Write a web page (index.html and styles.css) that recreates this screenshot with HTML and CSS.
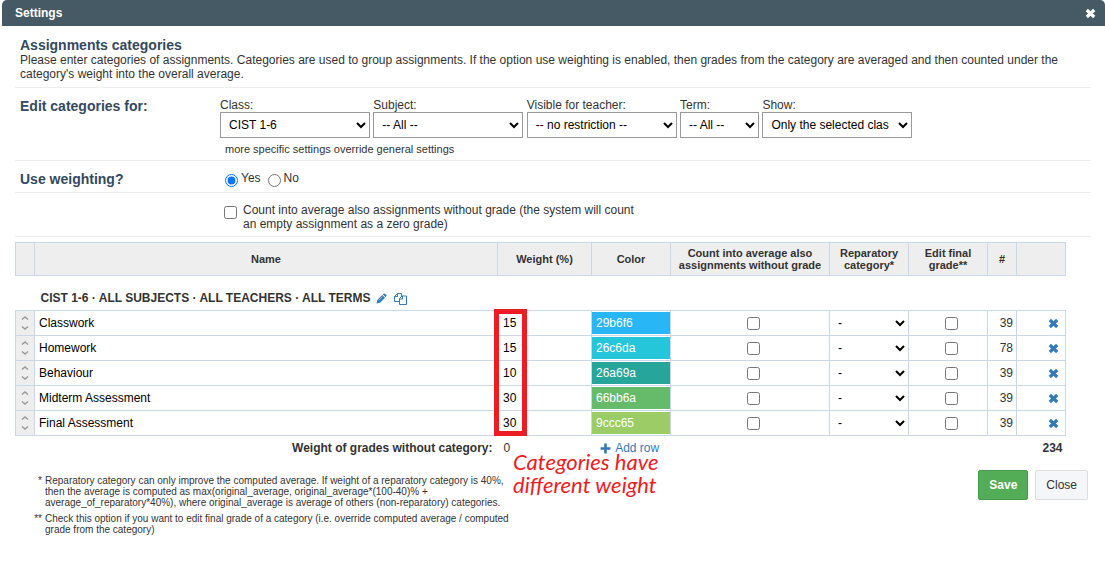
FILE: index.html
```html
<!DOCTYPE html>
<html lang="en">

<head>
    <meta charset="UTF-8">
    <meta name="viewport" content="width=device-width, initial-scale=1.0">
    <title>Settings</title>

    <link rel="stylesheet" href="styles.css">
</head>

<body>
    <!-- icons -->
    <svg class="sprite">
        <symbol id="i-updown" viewBox="0 0 8 14">
            <path d="M1 3.5 L4 1 L7 3.5 M1 10.5 L4 13 L7 10.5" fill="none" stroke="#999" stroke-width="1.4" />
        </symbol>
        <symbol id="i-times" viewBox="0 0 11 11">
            <path d="M1.8 2 L9.2 9 M9.2 2 L1.8 9" fill="none" stroke="currentColor" stroke-width="3.2" />
        </symbol>
        <symbol id="i-plus" viewBox="0 0 10 10">
            <path d="M5 0.5 V9.5 M0.5 5 H9.5" fill="none" stroke="currentColor" stroke-width="2.4" />
        </symbol>
        <symbol id="i-pencil" viewBox="0 0 12 12">
            <path d="M0.6 11.4 L1.4 7.6 L6.8 2.2 L9.8 5.2 L4.4 10.6 Z M7.5 1.5 L8.6 0.6 Q9.2 0.2 9.8 0.7 L11.3 2.2 Q11.8 2.8 11.4 3.4 L10.5 4.5 Z" fill="currentColor" />
            <path d="M3 8 L7 4" stroke="#fff" stroke-width="0.5" />
        </symbol>
        <symbol id="i-copy" viewBox="0 0 13 12">
            <path d="M5 8.5 H0.5 V3.5 L3.5 0.5 H7.5 V3 M3.5 0.5 V3.5 H0.5 M5.5 5.5 L8 3 H12.5 V11.5 H5.5 Z M8.5 3 V6 H5.5" fill="none" stroke="currentColor" />
        </symbol>
    </svg>

    <div class="dialog">
        <div class="titlebar">
            <span>Settings</span>
            <button class="titlebar-close" type="button" aria-label="Close dialog"><svg class="icon"><use href="#i-times" /></svg></button>
        </div>

        <form class="content">
            <div class="row intro">
                <h2>Assignments categories</h2>
                <p>Please enter categories of assignments. Categories are used to group assignments. If the option use weighting is enabled, then grades from the category are averaged and then counted under the category's weight into the overall average.</p>
            </div>

            <div class="row filters">
                <h2>Edit categories for:</h2>
                <div>
                    <div class="filter">
                        <label for="class">Class:</label>
                        <select id="class"><option>CIST 1-6</option></select>
                    </div>
                    <div class="filter">
                        <label for="subject">Subject:</label>
                        <select id="subject"><option>-- All --</option></select>
                    </div>
                    <div class="filter">
                        <label for="teacher">Visible for teacher:</label>
                        <select id="teacher"><option>-- no restriction --</option></select>
                    </div>
                    <div class="filter short">
                        <label for="term">Term:</label>
                        <select id="term"><option>-- All --</option></select>
                    </div>
                    <div class="filter">
                        <label for="show">Show:</label>
                        <select id="show" class="clipped"><option>Only the selected class</option></select>
                    </div>
                    <p class="hint">more specific settings override general settings</p>
                </div>
            </div>

            <div class="row weighting">
                <h2>Use weighting?</h2>
                <div class="radios">
                    <input type="radio" name="weighting" id="w-yes" checked>
                    <label for="w-yes">Yes</label>
                    <input type="radio" name="weighting" id="w-no">
                    <label for="w-no">No</label>
                </div>
            </div>

            <div class="row zero">
                <input type="checkbox" id="zero">
                <label for="zero">Count into average also assignments without grade (the system will count an empty assignment as a zero grade)</label>
            </div>

            <div class="table-wrap">
                <table class="categories">
                    <colgroup>
                        <col class="c-move">
                        <col>
                        <col class="c-weight">
                        <col class="c-color">
                        <col class="c-count">
                        <col class="c-color">
                        <col class="c-color">
                        <col class="c-num">
                        <col class="c-del">
                    </colgroup>
                    <thead>
                        <tr>
                            <th></th>
                            <th>Name</th>
                            <th>Weight (%)</th>
                            <th>Color</th>
                            <th>Count into average also assignments without grade</th>
                            <th>Reparatory category*</th>
                            <th>Edit final grade**</th>
                            <th>#</th>
                            <th></th>
                        </tr>
                    </thead>
                    <tbody>
                        <tr class="group">
                            <td colspan="9">
                                CIST 1-6 · ALL SUBJECTS · ALL TEACHERS · ALL TERMS
                                <a href="#" aria-label="Edit"><svg class="icon"><use href="#i-pencil" /></svg></a>
                                <a href="#" aria-label="Copy"><svg class="icon copy"><use href="#i-copy" /></svg></a>
                            </td>
                        </tr>
                        <tr class="item">
                            <td class="move"><svg><use href="#i-updown" /></svg></td>
                            <td><input type="text" aria-label="Name" value="Classwork"></td>
                            <td class="weight"><input type="text" aria-label="Weight" value="15"></td>
                            <td><input type="text" class="color blue" aria-label="Color" value="29b6f6"></td>
                            <td class="check"><input type="checkbox" aria-label="Count into average"></td>
                            <td><select aria-label="Reparatory category"><option>-</option></select></td>
                            <td class="check"><input type="checkbox" aria-label="Edit final grade"></td>
                            <td class="num">39</td>
                            <td class="del"><a href="#" aria-label="Delete"><svg class="icon"><use href="#i-times" /></svg></a></td>
                        </tr>
                        <tr class="item">
                            <td class="move"><svg><use href="#i-updown" /></svg></td>
                            <td><input type="text" aria-label="Name" value="Homework"></td>
                            <td class="weight"><input type="text" aria-label="Weight" value="15"></td>
                            <td><input type="text" class="color cyan" aria-label="Color" value="26c6da"></td>
                            <td class="check"><input type="checkbox" aria-label="Count into average"></td>
                            <td><select aria-label="Reparatory category"><option>-</option></select></td>
                            <td class="check"><input type="checkbox" aria-label="Edit final grade"></td>
                            <td class="num">78</td>
                            <td class="del"><a href="#" aria-label="Delete"><svg class="icon"><use href="#i-times" /></svg></a></td>
                        </tr>
                        <tr class="item">
                            <td class="move"><svg><use href="#i-updown" /></svg></td>
                            <td><input type="text" aria-label="Name" value="Behaviour"></td>
                            <td class="weight"><input type="text" aria-label="Weight" value="10"></td>
                            <td><input type="text" class="color teal" aria-label="Color" value="26a69a"></td>
                            <td class="check"><input type="checkbox" aria-label="Count into average"></td>
                            <td><select aria-label="Reparatory category"><option>-</option></select></td>
                            <td class="check"><input type="checkbox" aria-label="Edit final grade"></td>
                            <td class="num">39</td>
                            <td class="del"><a href="#" aria-label="Delete"><svg class="icon"><use href="#i-times" /></svg></a></td>
                        </tr>
                        <tr class="item">
                            <td class="move"><svg><use href="#i-updown" /></svg></td>
                            <td><input type="text" aria-label="Name" value="Midterm Assessment"></td>
                            <td class="weight"><input type="text" aria-label="Weight" value="30"></td>
                            <td><input type="text" class="color green" aria-label="Color" value="66bb6a"></td>
                            <td class="check"><input type="checkbox" aria-label="Count into average"></td>
                            <td><select aria-label="Reparatory category"><option>-</option></select></td>
                            <td class="check"><input type="checkbox" aria-label="Edit final grade"></td>
                            <td class="num">39</td>
                            <td class="del"><a href="#" aria-label="Delete"><svg class="icon"><use href="#i-times" /></svg></a></td>
                        </tr>
                        <tr class="item">
                            <td class="move"><svg><use href="#i-updown" /></svg></td>
                            <td><input type="text" aria-label="Name" value="Final Assessment"></td>
                            <td class="weight"><input type="text" aria-label="Weight" value="30"></td>
                            <td><input type="text" class="color lime" aria-label="Color" value="9ccc65"></td>
                            <td class="check"><input type="checkbox" aria-label="Count into average"></td>
                            <td><select aria-label="Reparatory category"><option>-</option></select></td>
                            <td class="check"><input type="checkbox" aria-label="Edit final grade"></td>
                            <td class="num">39</td>
                            <td class="del"><a href="#" aria-label="Delete"><svg class="icon"><use href="#i-times" /></svg></a></td>
                        </tr>
                    </tbody>
                    <tfoot>
                        <tr>
                            <td colspan="2" class="right">Weight of grades without category:</td>
                            <td class="rest">0</td>
                            <td class="add"><a href="#"><svg class="icon"><use href="#i-plus" /></svg> Add row</a></td>
                            <td colspan="5" class="total">234</td>
                        </tr>
                    </tfoot>
                </table>
                <div class="marker">
                    <div class="marker-box"></div>
                    <div class="marker-text">Categories have<br>different weight</div>
                </div>
            </div>

            <div class="bottom">
                <div class="notes">
                    <span>*</span>
                    <p>Reparatory category can only improve the computed average. If weight of a reparatory category is 40%, then the average is computed as max(original_average, original_average*(100-40)% + average_of_reparatory*40%), where original_average is average of others (non-reparatory) categories.</p>
                    <span>**</span>
                    <p>Check this option if you want to edit final grade of a category (i.e. override computed average / computed grade from the category)</p>
                </div>
                <div class="buttons">
                    <button type="button" class="btn save">Save</button>
                    <button type="button" class="btn">Close</button>
                </div>
            </div>
        </form>
    </div>
</body>

</html>
```

FILE: styles.css
```css
* {
    box-sizing: border-box;
}

body {
    margin: 0;
    background-color: white;
    color: #333;
    font-family: Arial, "Liberation Sans", sans-serif;
    font-size: 12px;
    line-height: 14px;
}

h2, p {
    margin: 0;
}

h2 {
    color: #34495e;
    font-size: 14px;
    line-height: 16px;
}

a {
    color: #337ab7;
    text-decoration: none;
}

input, select, button {
    font-family: inherit;
    font-size: 12px;
}

.sprite {
    display: none;
}

.icon {
    width: 11px;
    height: 11px;
    vertical-align: middle;
}

.dialog {
    margin-left: 2px;
}

.titlebar {
    display: flex;
    justify-content: space-between;
    align-items: center;
    height: 26px;
    padding: 0 9px 0 13px;
    background-color: #455a64;
    color: white;
    font-weight: bold;
    border-radius: 5px 5px 0 0;
}

.titlebar-close {
    display: flex;
    padding: 0;
    border: none;
    background: none;
    color: white;
}

.content {
    padding: 0 14px 0 13px;
}

.row {
    display: flex;
    align-items: flex-start;
    padding-left: 5px;
    border-bottom: 1px solid #eee;
}

.row > h2 {
    width: 200px;
}

.intro {
    display: block;
    padding-top: 11px;
    padding-bottom: 6px;
}

.intro h2 {
    width: auto;
}

.filters {
    padding-top: 10px;
    padding-bottom: 4px;
}

.filter {
    display: inline-block;
    width: 150px;
}

.filter.short {
    width: 79px;
}

.filter label {
    display: block;
}

.filter select {
    width: 100%;
    height: 26px;
    padding: 0 4px;
    border: 1px solid #999;
    border-radius: 0;
    background-color: white;
    color: black;
}

.filter select.clipped {
    padding-right: 6px;
}

.hint {
    padding: 4px 5px 0;
    font-size: 11px;
}

.weighting {
    padding-top: 10px;
    padding-bottom: 5px;
}

.radios {
    display: flex;
    padding-left: 5px;
}

.radios input {
    margin: 3px 3px 0 0;
}

.radios label {
    margin-right: 7px;
}

.zero {
    padding: 10px 0 5px 209px;
}

.zero input {
    margin: 3px 6px 0 0;
}

.zero label {
    width: 400px;
}

.table-wrap {
    position: relative;
    margin: 5px 25px 0 0;
}

.categories {
    width: 100%;
    table-layout: fixed;
    border-collapse: collapse;
}

.c-move {
    width: 19px;
}

.c-weight {
    width: 94px;
}

.c-color {
    width: 79px;
}

.c-count {
    width: 159px;
}

.c-num {
    width: 29px;
}

.c-del {
    width: 49px;
}

th {
    height: 33px;
    padding: 0 4px;
    background-color: #eee;
    border: 1px solid #c8d8e8;
    font-size: 11px;
    line-height: 12px;
}

td {
    padding: 0;
}

.group td {
    height: 35px;
    padding: 10px 0 0 25px;
    font-weight: bold;
}

.group a {
    margin: 0 2px;
}

.icon.copy {
    width: 13px;
    height: 12px;
}

.item td {
    height: 25px;
    border: 1px solid #c8d8e8;
}

.item input[type="text"] {
    display: block;
    width: 100%;
    height: 22px;
    padding: 0 4px;
    border: none;
    background: none;
    color: black;
}

.item .weight input {
    padding: 0 5px;
}

.item input.color {
    color: white;
}

.item input.blue {
    background-color: #29b6f6;
}

.item input.cyan {
    background-color: #26c6da;
}

.item input.teal {
    background-color: #26a69a;
}

.item input.green {
    background-color: #66bb6a;
}

.item input.lime {
    background-color: #9ccc65;
}

.item select {
    display: block;
    width: 100%;
    padding: 0 4px;
    border: none;
    background: none;
    color: black;
}

.item td.check {
    padding-left: 7px;
}

.check input {
    display: block;
    margin: 0 auto;
}

.item td.move {
    background-color: #eee;
}

.move svg {
    display: block;
    width: 8px;
    height: 14px;
    margin: 0 auto;
}

.item td.num {
    padding-right: 3px;
    text-align: right;
}

.item td.del {
    padding-right: 6px;
    text-align: right;
}

tfoot td {
    height: 24px;
}

.right {
    padding-right: 5px;
    text-align: right;
    font-weight: bold;
}

.rest {
    padding-left: 6px;
}

.add {
    padding-left: 8px;
}

.add .icon {
    margin-right: 2px;
}

.total {
    padding-right: 3px;
    text-align: right;
    font-weight: bold;
}

/* red marker over the weights */
.marker {
    position: absolute;
    top: 67px;
    right: 402px;
    width: 170px;
    color: #ed1c24;
    pointer-events: none;
}

.marker-box {
    width: 33px;
    height: 127px;
    border: 5px solid #ed1c24;
}

.marker-text {
    padding: 14px 0 0 19px;
    font-family: "Ink Free", Lato, cursive;
    font-size: 22px;
    font-style: italic;
    line-height: 23px;
    white-space: nowrap;
}

.bottom {
    display: flex;
    justify-content: space-between;
    padding: 10px 3px 0 17px;
}

.notes {
    display: grid;
    grid-template-columns: 10px 466px;
    column-gap: 3px;
    row-gap: 5px;
    align-content: start;
    padding-top: 5px;
    font-size: 10px;
    line-height: 11px;
}

.notes span {
    text-align: right;
}

.buttons {
    display: flex;
    gap: 7px;
}

.btn {
    height: 30px;
    padding: 0 10px;
    border: 1px solid #ddd;
    border-radius: 2px;
    background-color: #f5f6fa;
    color: #333;
}

.btn.save {
    border-color: #449d48;
    background-color: #53ad57;
    color: white;
    font-weight: bold;
}
```
